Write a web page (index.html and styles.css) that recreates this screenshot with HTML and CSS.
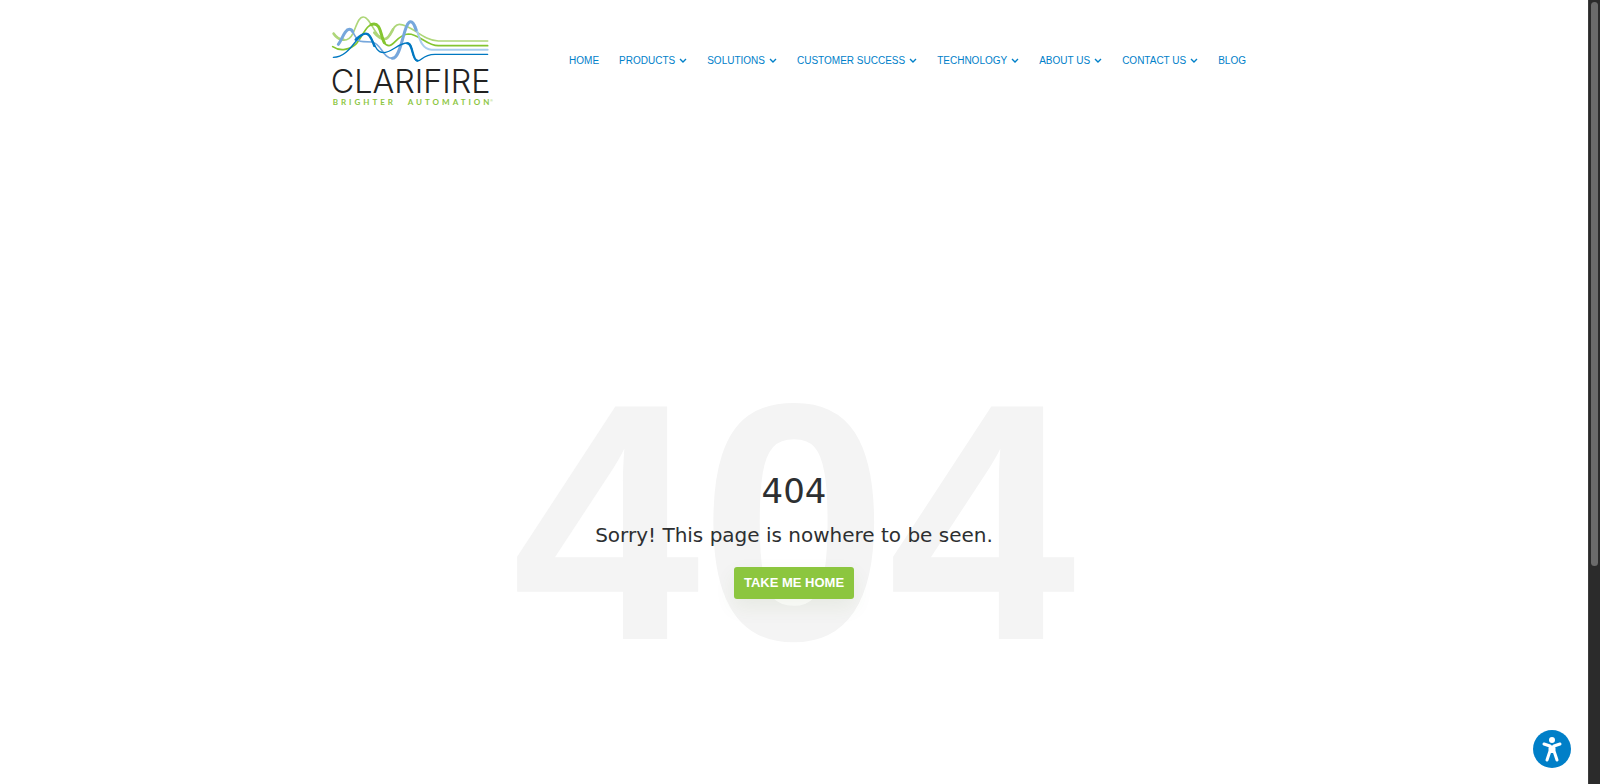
FILE: index.html
```
<!DOCTYPE html>
<html lang="en">
<head>
    <meta charset="UTF-8">
    <meta name="viewport" content="width=device-width, initial-scale=1.0">
    <title>404 - Clarifire</title>
    <link rel="stylesheet" href="styles.css">
</head>
<body>
    <div class="page">
        <header class="header">
            <a class="logo" href="#" aria-label="Clarifire Brighter Automation">
                <svg viewBox="0 0 555 330" fill="none" stroke-linecap="round">
                    <g stroke="#aed679">
                        <path stroke-width="5" d="M41 85C58 112 86 112 99 85C111 58 116 36 130 36C152 36 165 101 195 102C214 102 215 58 238 58C275 58 308 108 355 108H503"/>
                        <path stroke-width="8" d="M41 86C50 99 60 104 70 104M163 83C174 97 184 102 195 102C206 101 214 82 219 73"/>
                    </g>
                    <g stroke="#84c52f">
                        <path stroke-width="5" d="M38 125C60 140 90 135 110 115C130 90 140 57 162 57C190 57 180 122 207 122C222 122 235 88 265 87C298 87 320 122 355 122H503"/>
                        <path stroke-width="9" d="M153 59C184 47 181 94 193 113"/>
                    </g>
                    <path stroke="#a9cdec" stroke-width="6" d="M272 50C298 50 288 134 335 134H503"/>
                    <g stroke="#76a7dc">
                        <path stroke-width="9" d="M55 118C66 104 74 73 88 73C93 73 96 76 98 80"/>
                        <path stroke-width="5" d="M96 78C108 94 109 110 130 110L155 111C185 115 188 160 217 160"/>
                        <path stroke-width="9" d="M217 160C246 160 250 50 272 50C280 50 284 62 288 75"/>
                    </g>
                    <g stroke="#0078c1">
                        <path stroke-width="4" d="M40 157C91 157 110 86 137 86C160 86 160 143 190 143C215 143 235 114 262 114C280 114 275 168 292 168C308 168 305 149 345 148H503"/>
                        <path stroke-width="7" d="M107 104C119 93 127 86 137 86C151 86 156 107 163 123M262 115C279 114 276 166 292 167"/>
                    </g>
                    <text class="logo-name" x="32" y="265">CLARIFIRE</text>
                    <text class="logo-tag" x="38" y="299">BRIGHTER</text>
                    <text class="logo-tag" x="263" y="299">AUTOMATION</text>
                    <text class="logo-mark" x="511" y="290">®</text>
                </svg>
            </a>
            <nav class="nav">
                <a href="#">HOME</a>
                <a href="#">PRODUCTS <svg viewBox="0 0 8 6"><path d="M1 1l3 3 3-3"/></svg></a>
                <a href="#">SOLUTIONS <svg viewBox="0 0 8 6"><path d="M1 1l3 3 3-3"/></svg></a>
                <a href="#">CUSTOMER SUCCESS <svg viewBox="0 0 8 6"><path d="M1 1l3 3 3-3"/></svg></a>
                <a href="#">TECHNOLOGY <svg viewBox="0 0 8 6"><path d="M1 1l3 3 3-3"/></svg></a>
                <a href="#">ABOUT US <svg viewBox="0 0 8 6"><path d="M1 1l3 3 3-3"/></svg></a>
                <a href="#">CONTACT US <svg viewBox="0 0 8 6"><path d="M1 1l3 3 3-3"/></svg></a>
                <a href="#">BLOG</a>
            </nav>
        </header>
        <main class="error">
            <div class="error-back" aria-hidden="true">404</div>
            <div class="error-content">
                <h1>404</h1>
                <p>Sorry! This page is nowhere to be seen.</p>
                <a class="button" href="#">TAKE ME HOME</a>
            </div>
        </main>
    </div>
    <div class="scroll-track">
        <div class="scroll-thumb"></div>
    </div>
    <button class="access" type="button" aria-label="Accessibility options">
        <svg viewBox="0 0 38 38">
            <circle cx="19" cy="10" r="3"/>
            <path d="M11 14L17 16V21L14 30M27 14L21 16V21L24 30"/>
            <path class="access-body" d="M17 16H21V21L19 23L17 21Z"/>
        </svg>
    </button>
</body>
</html>
```
FILE: styles.css
```
* {
    box-sizing: border-box;
}
body {
    margin: 0;
    display: flex;
    min-height: 100vh;
    background-color: #fff;
    color: #2d2f31;
    font-family: "Liberation Sans", Arial, sans-serif;
}
.page {
    flex: 1;
    display: flex;
    flex-direction: column;
}
.header {
    width: 100%;
    max-width: 948px;
    margin: 0 auto;
    padding: 5px 22px 5px 0;
    display: flex;
    align-items: center;
    justify-content: space-between;
}
.logo svg {
    display: block;
    width: 185px;
    height: 110px;
}
.logo-name {
    fill: #222;
    font-family: Inter, "Liberation Sans", sans-serif;
    font-size: 97px;
    font-weight: 300;
}
.logo-tag {
    fill: #8cc63f;
    font-family: Lato, sans-serif;
    font-size: 24px;
    font-weight: 700;
    letter-spacing: 9px;
}
.logo-mark {
    fill: #8cc63f;
    font-size: 10px;
}
.nav {
    display: flex;
    gap: 20px;
    padding-top: 2px;
}
.nav a {
    display: flex;
    align-items: center;
    gap: 4px;
    color: #0080c9;
    font-size: 10px;
    line-height: 20px;
    text-decoration: none;
    white-space: nowrap;
}
.nav svg {
    width: 8px;
    height: 6px;
    fill: none;
    stroke: #0080c9;
    stroke-width: 1.4;
}
.error {
    position: relative;
    flex: 1;
    display: flex;
    align-items: center;
    justify-content: center;
    padding-bottom: 140px;
    padding-top: 302px;
}
.error-back {
    position: absolute;
    inset: 284px 0 144px;
    display: flex;
    align-items: center;
    justify-content: center;
    color: #f4f4f4;
    font-size: 338px;
    font-weight: 700;
    line-height: 1;
}
.error-content {
    position: relative;
    text-align: center;
    font-family: "DejaVu Sans", Verdana, sans-serif;
}
.error h1 {
    margin: 0;
    font-size: 34px;
    font-weight: 400;
    line-height: 48px;
}
.error p {
    margin: 4px 0 16px;
    font-size: 20px;
    line-height: 32px;
}
.button {
    display: inline-block;
    padding: 0 10px;
    border-radius: 3px;
    background-color: #8cc63f;
    box-shadow: 0 8px 20px rgba(80, 110, 30, 0.08);
    color: #fff;
    font-family: "Liberation Sans", Arial, sans-serif;
    font-size: 13px;
    font-weight: 700;
    line-height: 32px;
    text-decoration: none;
}
.scroll-track {
    width: 12px;
    padding: 2px;
    background-color: #2b2b2b;
    border-left: 1px solid #3d3d3d;
}
.scroll-thumb {
    width: 7px;
    height: 72vh;
    margin: 0 auto;
    border-radius: 4px;
    background-color: #6b6b6b;
}
.access {
    position: fixed;
    right: 29px;
    bottom: 16px;
    width: 38px;
    height: 38px;
    padding: 0;
    border: 0;
    border-radius: 50%;
    background-color: #007fc8;
}
.access svg {
    display: block;
    fill: #fff;
}
.access path {
    stroke: #fff;
    stroke-width: 3;
    stroke-linecap: round;
    stroke-linejoin: round;
    fill: none;
}
.access .access-body {
    fill: #fff;
    stroke-width: 1;
}
```
